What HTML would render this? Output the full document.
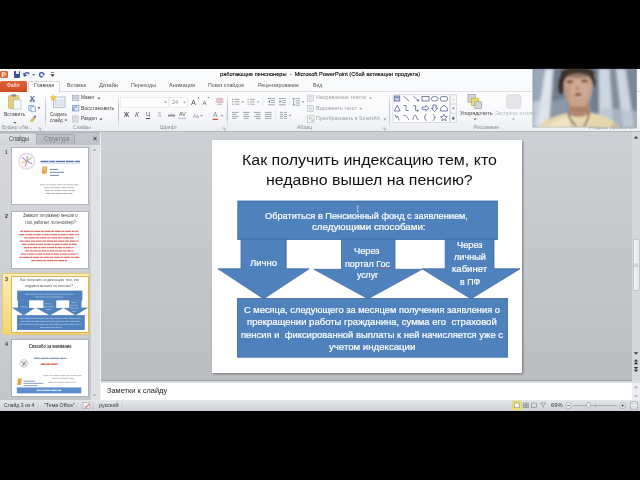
<!DOCTYPE html>
<html><head><meta charset="utf-8">
<style>
*{margin:0;padding:0;box-sizing:border-box}
html,body{width:640px;height:480px;overflow:hidden;background:#000}
body{font-family:"Liberation Sans",sans-serif;position:relative;color:#222}
.a{position:absolute}
.t{position:absolute;white-space:pre;transform-origin:0 0;filter:blur(.25px)}
#app{left:0;top:69px;width:640px;height:341.8px;background:#fff}
#titlebar{left:0;top:69px;width:640px;height:11px;background:#fbfcfd}
#tabrow{left:0;top:80px;width:640px;height:12px;background:#f9fafb}
#ribbon{left:0;top:92px;width:640px;height:40.4px;background:linear-gradient(#fefefe,#f7f8fa 60%,#eceef1);border-bottom:1px solid #b4b8be}
#panel{left:0;top:132px;width:100px;height:268px;background:#d3d6db}
#edit{left:100px;top:132px;width:540px;height:249px;background:linear-gradient(#cccfd3,#bbbdc1);border-bottom:1px solid #9da0a6}
#notes{left:100px;top:381px;width:540px;height:19px;background:#fff;border-top:2px solid #d9dce0}
#status{left:0;top:399.8px;width:640px;height:11px;background:linear-gradient(#e4e6ea,#cfd2d7)}
#slide{left:212px;top:140px;width:310.2px;height:233px;background:#fff;box-shadow:1px 1px 2px rgba(0,0,0,.4)}
.blue{fill:#4f81bd;stroke:#3f6aa3;stroke-width:.8}

.sep{top:94px;width:1px;height:35px;background:linear-gradient(rgba(190,194,200,0),#c3c7cd 30%,#c3c7cd 70%,rgba(190,194,200,0))}
.th{background:#fff;border:1px solid #aeb2b8}
</style></head><body>
<div id="app" class="a"></div>
<div id="titlebar" class="a"></div>
<div id="tabrow" class="a"></div>
<div id="ribbon" class="a"></div>
<div id="panel" class="a"></div>
<div id="edit" class="a"></div>
<div id="notes" class="a"></div>
<div id="status" class="a"></div>

<!-- FILE TAB + active tab -->
<div class="a" style="left:0;top:80.5px;width:26.5px;height:11px;background:linear-gradient(#e0633a,#cf4a22);border-radius:1.5px 1.5px 0 0"></div>
<div class="a" style="left:28px;top:80.5px;width:32px;height:12px;background:#fefefe;border:1px solid #d6d9de;border-bottom:none;border-radius:2px 2px 0 0"></div>
<!-- QAT icons -->
<div class="a" style="left:0;top:70.6px;width:7.5px;height:7.2px;background:#e9773f;border:1px solid #c9673a;border-radius:1px"></div>
<div class="a" style="left:14px;top:71px;width:6px;height:7px;background:#3a4f9a;border-radius:1px"></div>
<div class="a" style="left:15.5px;top:71px;width:3px;height:2.5px;background:#dfe6f5"></div>
<div class="a" style="left:60px;top:91.3px;width:580px;height:.8px;background:#dde0e5"></div>
<!-- RIBBON separators -->
<div class="a sep" style="left:45px"></div>
<div class="a sep" style="left:118px"></div>
<div class="a sep" style="left:227px"></div>
<div class="a sep" style="left:388.5px"></div>
<!-- PANEL -->
<div class="a" style="left:0;top:132px;width:100px;height:12.5px;background:linear-gradient(#b3b7bd,#c4c7cd 18%,#c0c3c9)"></div>
<div class="a" style="left:0;top:133.2px;width:36.6px;height:11.8px;background:linear-gradient(#dddfe3,#cfd2d7);border-right:1px solid #a9adb4;border-top:1px solid #c2c5cb;border-radius:0 2px 0 0"></div>
<div class="a" style="left:37px;top:133.8px;width:38px;height:10.7px;background:linear-gradient(#bfc2c8,#b6b9bf);border:1px solid #a4a8af;border-left:none;border-bottom:none;border-radius:0 2px 0 0"></div>
<div class="a" style="left:0;top:144.5px;width:100px;height:255.5px;background:linear-gradient(#d6d8dc,#c3c6cb)"></div>
<div class="a" style="left:90.6px;top:144.5px;width:9px;height:255.5px;background:#dfe1e5"></div>
<div class="a" style="left:99.6px;top:132.4px;width:1.8px;height:267.6px;background:#eff0f2"></div>
<!-- thumbs -->
<div class="a th" style="left:10.6px;top:146.5px;width:78px;height:58.5px"></div>
<div class="a th" style="left:10.6px;top:211px;width:78px;height:57.6px"></div>
<div class="a" style="left:1.6px;top:273px;width:88.8px;height:61.8px;background:linear-gradient(#fbeeb4,#f3d470);border:1px solid #e6c970;border-radius:1.5px"></div>
<div class="a th" style="left:10.6px;top:275.5px;width:78px;height:57px;border-color:#d9b860"></div>
<div class="a th" style="left:10.6px;top:338.5px;width:78px;height:58.5px"></div>
<!-- right scrollbar -->
<div class="a" style="left:632px;top:132px;width:8px;height:249px;background:#d4d7dc"></div>
<div class="a" style="left:632.7px;top:239px;width:7.3px;height:51.5px;background:linear-gradient(90deg,#f2f3f6,#e4e6eb);border:1px solid #c2c5cb;border-radius:1px"></div>
<div class="a" style="left:632px;top:383px;width:8px;height:17px;background:#eceef1"></div>
<div id="slide" class="a"></div>
<svg class="a" style="left:0;top:0" width="640" height="480" viewBox="0 0 640 480">
 <g id="shapes">
  <rect class="blue" x="237.8" y="201" width="259.6" height="38.6"/>
  <polygon class="blue" points="241,239 286.2,239 286.2,268.8 309.2,268.8 263.6,298.8 218,268.8 241,268.8"/>
  <polygon class="blue" points="341.5,239 395,239 395,269.3 422,269.3 368,298.8 314,269.3 341.5,269.3"/>
  <polygon class="blue" points="445.2,239 494,239 494,268.8 520,268.8 471,298.8 422,268.8 445.2,268.8"/>
  <rect class="blue" x="237.4" y="298.4" width="270.2" height="58.8"/>
 </g>
</svg>



<!-- ICONS overlay -->
<svg class="a" style="left:0;top:0" width="640" height="480" viewBox="0 0 640 480">
 <defs>
  <g id="dd"><path d="M0,0 L3,0 L1.5,1.8 Z" fill="#555"/></g>
  <g id="ddl"><path d="M0,0 L3,0 L1.5,1.8 Z" fill="#9a9da2"/></g>
 </defs>
 <!-- QAT: undo, redo, customize -->
 <path d="M24.5,75.5 C24.5,72 28.5,71.5 29,74.5 M23.5,73.5 L24.5,76 L27,75" stroke="#3d55a5" stroke-width="1.3" fill="none"/>
 <use href="#dd" x="32.2" y="74"/>
 <path d="M44,75.5 C44,72 40,71.5 39.5,74.5 C39.3,76.5 41.5,77.5 43,76.5" stroke="#3d55a5" stroke-width="1.3" fill="none"/>
 <path d="M50.8,72.5 h3.4 M50.8,74.5 L54.2,74.5 L52.5,76.5 Z" stroke="#444" stroke-width=".6" fill="#444"/>
 <!-- Paste -->
 <rect x="8.5" y="95.5" width="10.5" height="13" rx="1" fill="#e6cd7d" stroke="#c9a94e" stroke-width=".6"/>
 <rect x="11.5" y="94.3" width="4.5" height="2.4" rx=".6" fill="#8f8f95"/>
 <rect x="13.6" y="100" width="7.4" height="9" fill="#f6f8fc" stroke="#aab4c8" stroke-width=".6"/>
 <use href="#dd" x="13.5" y="122"/>
 <!-- cut / copy / painter -->
 <path d="M30.5,96 L33.5,100.5 M34,96 L31,100.5" stroke="#3a4f8f" stroke-width="1"/>
 <circle cx="30.8" cy="101" r="1" fill="none" stroke="#3a4f8f" stroke-width=".6"/><circle cx="33.8" cy="101" r="1" fill="none" stroke="#3a4f8f" stroke-width=".6"/>
 <rect x="28.8" y="105.3" width="4.4" height="5" fill="#dbe6f6" stroke="#6f8fc4" stroke-width=".6"/>
 <rect x="31" y="106.8" width="4.4" height="5" fill="#eaf1fb" stroke="#6f8fc4" stroke-width=".6"/>
 <use href="#dd" x="37.5" y="107.3"/>
 <path d="M29.5,121.5 L33,117 L35.5,118.5 L32.5,122 Z" fill="#d9b95c"/><path d="M33.3,116.8 L35.2,115.2 L36.2,116.4 L35.4,118.3 Z" fill="#5d6fa3"/>
 <path d="M38,128 l2.6,0 l0,2.6 M40.6,130.6 L38.6,128.6" stroke="#8a8d92" stroke-width=".5" fill="none"/>
 <!-- New slide -->
 <rect x="53.5" y="97" width="11.5" height="10.5" fill="#f4f7fb" stroke="#9aa4b4" stroke-width=".7"/>
 <rect x="55.5" y="100" width="7.5" height="5.5" fill="#dfe7f3" stroke="#b0bccd" stroke-width=".4"/>
 <path d="M53.2,94.6 l1.1,1.9 2.1,.3 -1.5,1.5 .4,2.1 -2.1,-1 -2,1 .4,-2.1 -1.5,-1.5 2.1,-.3z" fill="#f1d24a" stroke="#caa72a" stroke-width=".3"/>
 <use href="#dd" x="64.4" y="119.4"/>
 <!-- layout / reset / section icons -->
 <rect x="72.3" y="95.2" width="6.6" height="5.4" fill="#eef2f8" stroke="#8e99ab" stroke-width=".6"/><path d="M73.3,97 h4.6 M73.3,98.8 h2 M76,98.8 h2" stroke="#7f8da6" stroke-width=".7"/>
 <rect x="72.3" y="105.6" width="6.6" height="5.4" fill="#dce7f5" stroke="#5f7fb7" stroke-width=".6"/><path d="M74,110.8 C72.5,108 75,106 77,107.5" stroke="#3f62a5" stroke-width=".8" fill="none"/>
 <rect x="72.8" y="116" width="5.2" height="6" fill="#f3f4f6" stroke="#9a9ea6" stroke-width=".6"/><path d="M73.8,117.6 h3.2 M73.8,119 h3.2 M73.8,120.4 h3.2" stroke="#a9adb4" stroke-width=".5"/>
 <use href="#dd" x="97.4" y="97.6"/><use href="#dd" x="99.4" y="118.6"/>
 <!-- Font combos -->
 <rect x="120.3" y="97.3" width="48.2" height="9.8" fill="#fff" stroke="#dfe2e7" stroke-width=".6"/>
 <rect x="169.3" y="97.3" width="18" height="9.8" fill="#fff" stroke="#dfe2e7" stroke-width=".6"/>
 <use href="#ddl" x="164" y="101.6"/><use href="#ddl" x="183" y="101.6"/>
 <path d="M197.2,98.2 l1.2,-1.4 1.2,1.4z" fill="#5872b0"/><path d="M207.3,97 l1.1,1.3 1.1,-1.3z" fill="#5872b0"/>
 <rect x="216.5" y="98" width="6.5" height="5" rx="1" fill="#e8c6cb" stroke="#b9a0a8" stroke-width=".4"/><path d="M217,104.5 h5" stroke="#9a9da2" stroke-width=".6"/>
 <path d="M212.6,119.3 h5.4" stroke="#c0392b" stroke-width="1.1"/><use href="#ddl" x="220.6" y="115"/>
 <use href="#ddl" x="200" y="115"/><path d="M178.8,118.4 h6.8 M178.8,118.4 l1,-.7 M185.6,118.4 l-1,-.7" stroke="#6b7fb0" stroke-width=".5" fill="none"/>
 <path d="M222.5,128 l2.6,0 l0,2.6 M225.1,130.6 L223.1,128.6" stroke="#8a8d92" stroke-width=".5" fill="none"/>
 <!-- Paragraph icons row 1 -->
 <g stroke="#8d929a" stroke-width=".8">
  <path d="M234.5,99.4 h5 M234.5,101.8 h5 M234.5,104.2 h5"/><path d="M232,99.4 h1.2 M232,101.8 h1.2 M232,104.2 h1.2" stroke="#6b6f78"/>
  <path d="M250,99.4 h4.5 M250,101.8 h4.5 M250,104.2 h4.5"/><path d="M247.5,99.4 h1.2 M247.5,101.8 h1.2 M247.5,104.2 h1.2" stroke="#6b6f78"/>
  <path d="M268,98.6 h7 M271,100.6 h4 M271,102.6 h4 M268,104.8 h7"/><path d="M278.8,98.6 h7 M281.8,100.6 h4 M281.8,102.6 h4 M278.8,104.8 h7"/>
  <path d="M295.5,98.6 h4.5 M295.5,100.8 h4.5 M295.5,103 h4.5 M295.5,105.2 h4.5"/>
 </g>
 <path d="M268,101.6 l2,-1.4 v2.8z M281.4,101.6 l-2,-1.4 v2.8z" fill="#5872b0"/>
 <path d="M293.6,98 v7.5 M292.5,99.3 l1.1,-1.4 1.1,1.4 M292.5,104.2 l1.1,1.4 1.1,-1.4" stroke="#5872b0" stroke-width=".6" fill="none"/>
 <use href="#ddl" x="241.3" y="101.2"/><use href="#ddl" x="256.6" y="101.2"/><use href="#ddl" x="301.6" y="101.2"/>
 <!-- Paragraph icons row 2 -->
 <g stroke="#8d929a" stroke-width=".8">
  <path d="M232,112.4 h6.8 M232,114.4 h4.6 M232,116.4 h6.8 M232,118.4 h4.6"/>
  <path d="M243,112.4 h6.6 M244,114.4 h4.6 M243,116.4 h6.6 M244,118.4 h4.6"/>
  <path d="M253.8,112.4 h6.8 M256,114.4 h4.6 M253.8,116.4 h6.8 M256,118.4 h4.6"/>
  <path d="M265,112.4 h6.6 M265,114.4 h6.6 M265,116.4 h6.6 M265,118.4 h6.6"/>
  <path d="M280,112.4 h3 M280,114.4 h3 M280,116.4 h3 M280,118.4 h3 M284,112.4 h3 M284,114.4 h3 M284,116.4 h3 M284,118.4 h3"/>
 </g>
 <use href="#ddl" x="288.6" y="114.8"/>
 <path d="M226.2,110 v10" stroke="#d5d8dd" stroke-width=".5"/><path d="M262.8,96 v10 M289.3,96 v10 M275.6,110 v10" stroke="#d5d8dd" stroke-width=".6"/>
 <!-- text direction etc icons -->
 <g fill="#f1f3f6" stroke="#a7abb3" stroke-width=".5">
  <rect x="307.2" y="95" width="6.4" height="6.4"/><rect x="307.2" y="105.3" width="6.4" height="6.4"/><rect x="307.6" y="115.8" width="6.4" height="6.4"/>
 </g>
 <path d="M308.5,96.6 h3.8 M308.5,98.2 h3.8 M308.5,99.8 h3.8 M308.5,107 h3.8 M308.5,108.6 h3.8 M308.5,110.2 h3.8" stroke="#b4b8bf" stroke-width=".5"/>
 <rect x="309" y="117.2" width="2.4" height="1.8" fill="#b9cf9a"/><rect x="311.2" y="119.4" width="2.2" height="1.8" fill="#b9cf9a"/>
 <use href="#ddl" x="369" y="97.6"/><use href="#ddl" x="359.4" y="108"/><use href="#ddl" x="383.4" y="118.6"/>
 <path d="M382.7,128 l2.6,0 l0,2.6 M385.3,130.6 L383.3,128.6" stroke="#8a8d92" stroke-width=".5" fill="none"/>
 <!-- Shapes gallery -->
 <rect x="393" y="94.8" width="56.6" height="27.6" fill="#fff" stroke="#c3c8d0" stroke-width=".6"/>
 <rect x="450.2" y="94.8" width="6.2" height="27.6" fill="#f4f6f8" stroke="#c3c8d0" stroke-width=".6"/>
 <path d="M450.2,104 h6.2 M450.2,113.2 h6.2" stroke="#c3c8d0" stroke-width=".6"/>
 <path d="M452.1,100.2 l1.2,-1.5 1.2,1.5z" fill="#bbb"/><path d="M452.1,107.8 l1.2,1.5 1.2,-1.5z" fill="#444"/><path d="M452.1,117.2 h2.4 M452.1,118.2 l1.2,1.5 1.2,-1.5z" stroke="#444" stroke-width=".5" fill="#444"/>
 <g fill="none" stroke="#3f4f86" stroke-width=".7">
  <rect x="394.2" y="96" width="5.6" height="5" fill="#c5d3ea"/><path d="M395.2,97.6 h3.6" />
  <path d="M403.4,96 L409,101"/><path d="M413.4,96 L418.6,101 M418.6,101 l-1.8,-.4 M418.6,101 l-.4,-1.8"/>
  <rect x="422" y="96.6" width="7" height="4.4"/><ellipse cx="434.6" cy="98.8" rx="3.5" ry="2.3"/><rect x="440.4" y="96.6" width="7" height="4.4" rx="1.2"/>
  <path d="M394.3,111 L397.2,105.2 L400.1,111 Z"/><path d="M403.4,105.6 h2.6 v5 h2.8"/><path d="M413,105.6 h2.6 v5 h2.8 M418.4,110.6 l-1.3,-1 M418.4,110.6 l-1.3,1"/>
  <path d="M422.2,107 h3.6 v-1.6 l3.2,2.8 l-3.2,2.8 v-1.6 h-3.6z"/><path d="M433,105 h3 v3.4 h1.6 l-3.1,3 l-3.1,-3 h1.6z"/><path d="M440.6,111 L440.6,108 L444,105.4 L447.4,108 L447.4,111 Z"/>
  <path d="M395,114.6 l1.5,3 l1,-1.6 l1.6,4.4"/><path d="M403.2,115.6 C406,114.6 407.4,117 409,120"/><path d="M412.8,120 C414,114 415.6,114 416.4,117 S418,120 418.8,119"/>
  <path d="M426.6,114.4 c-1.4,0 -1.4,.6 -1.4,1.6 s0,1.4 -1.2,1.4 c1.2,0 1.2,.6 1.2,1.4 s0,1.6 1.4,1.6"/><path d="M432.8,114.4 c1.4,0 1.4,.6 1.4,1.6 s0,1.4 1.2,1.4 c-1.2,0 -1.2,.6 -1.2,1.4 s0,1.6 -1.4,1.6"/>
  <path d="M443.9,114.2 l1,2.2 2.4,.3 -1.8,1.6 .5,2.4 -2.1,-1.2 -2.1,1.2 .5,-2.4 -1.8,-1.6 2.4,-.3z"/>
 </g>
 <!-- Arrange -->
 <rect x="468" y="94.6" width="7.6" height="7.6" fill="#d3d6dc" stroke="#8a8e96" stroke-width=".6"/>
 <rect x="471.4" y="98.2" width="7.4" height="7.4" fill="#f0de6a" stroke="#b7a33a" stroke-width=".6"/>
 <rect x="474.8" y="101.8" width="6.6" height="6.6" fill="#d3d6dc" stroke="#8a8e96" stroke-width=".6"/>
 <use href="#dd" x="473.6" y="118.4"/>
 <!-- Quick styles (disabled) -->
 <rect x="506.5" y="94.6" width="14.5" height="13.6" rx="3" fill="#e3e5e8" stroke="#d2d5d9" stroke-width=".6"/>
 <use href="#ddl" x="512" y="118.4"/>
 <!-- panel scrollbar arrows -->
 <path d="M92.8,150.6 l1.6,-1.8 1.6,1.8z" fill="#8b8f96"/>
 <path d="M92.8,394.4 l1.6,1.8 1.6,-1.8z" fill="#8b8f96"/>
 <!-- right scrollbar -->
 <path d="M633.8,138.6 l2.2,-2.6 2.2,2.6z" fill="#3a3a3a"/>
 <path d="M633.8,352.2 l2.2,2.6 2.2,-2.6z" fill="#3a3a3a"/>
 <path d="M633.8,361.4 l2.2,-2.2 2.2,2.2z M633.8,364.2 l2.2,-2.2 2.2,2.2z" fill="#2a2a2a"/>
 <path d="M633.8,367 l2.2,2.2 2.2,-2.2z M633.8,369.8 l2.2,2.2 2.2,-2.2z" fill="#2a2a2a"/>
 <path d="M634.4,264 h3.6 M634.4,265.2 h3.6 M634.4,266.4 h3.6" stroke="#9ea3ab" stroke-width=".5"/>
 <path d="M633.8,388.2 l2.2,-2.4 2.2,2.4z M633.8,395.2 l2.2,2.4 2.2,-2.4z" fill="#aeb1b7"/>
 <!-- status bar -->
 <path d="M38.5,402 v8 M78.4,402 v8 M93,402 v8 M122.5,402 v8" stroke="#b5b9bf" stroke-width=".6"/>
 <path d="M39.2,402 v8 M79.1,402 v8 M123.2,402 v8" stroke="#f2f3f5" stroke-width=".6"/>
 <rect x="83" y="402.6" width="6.4" height="5.6" fill="#f4f5f7" stroke="#8f939b" stroke-width=".5"/><path d="M85,406.2 l1.2,1.4 2.6,-3.4" stroke="#c0392b" stroke-width=".9" fill="none"/>
 <rect x="512.4" y="401.2" width="8.8" height="8.6" rx="1" fill="#f6e867" stroke="#dccb3c" stroke-width=".6"/>
 <rect x="514.2" y="403" width="5.2" height="4.8" fill="#fbfbfb" stroke="#6d7079" stroke-width=".5"/>
 <g fill="none" stroke="#6d7079" stroke-width=".5">
  <rect x="523.2" y="403" width="2.2" height="2"/><rect x="526.2" y="403" width="2.2" height="2"/><rect x="523.2" y="405.8" width="2.2" height="2"/><rect x="526.2" y="405.8" width="2.2" height="2"/>
  <rect x="531.6" y="403" width="5" height="4.4"/><path d="M540.4,403 h5.2 l-2.6,3.2z M543,406.2 v1.8"/>
 </g>
 <circle cx="568.6" cy="405.6" r="3" fill="#f1f2f4" stroke="#8f939b" stroke-width=".6"/><path d="M567,405.6 h3.2" stroke="#444" stroke-width=".7"/>
 <path d="M573.5,405.6 h43.5" stroke="#8f939b" stroke-width=".7"/><path d="M595.6,403.8 v3.6" stroke="#8f939b" stroke-width=".5"/>
 <path d="M587,402.6 h3 v4 l-1.5,1.6 l-1.5,-1.6z" fill="#f4f5f7" stroke="#7e828a" stroke-width=".5"/>
 <circle cx="622.6" cy="405.6" r="3" fill="#f1f2f4" stroke="#8f939b" stroke-width=".6"/><path d="M621,405.6 h3.2 M622.6,404 v3.2" stroke="#444" stroke-width=".7"/>
 <rect x="630.4" y="402" width="7" height="7" fill="#f4f5f7" stroke="#8f939b" stroke-width=".6"/><path d="M631.6,403.2 l1.6,1.6 M636.2,403.2 l-1.6,1.6 M631.6,407.8 l1.6,-1.6 M636.2,407.8 l-1.6,-1.6" stroke="#555" stroke-width=".5"/>
</svg>

<!-- THUMB CONTENT -->
<svg class="a" style="left:0;top:0" width="640" height="480" viewBox="0 0 640 480">
 <!-- thumb 1 -->
 <circle cx="26.7" cy="161.3" r="7.8" fill="#fdfbfd" stroke="#e3d3e8" stroke-width="1.3"/>
 <g stroke-width="1.1" stroke-linecap="round" fill="none" opacity=".6">
  <path d="M26.7,161.3 L22.5,157.5" stroke="#8d4fa5"/><path d="M26.7,161.3 L31,157.6" stroke="#5b9a3a"/>
  <path d="M26.7,161.3 L21.6,162.6" stroke="#d5a62a"/><path d="M26.7,161.3 L31.6,163.4" stroke="#3a62b5"/>
  <path d="M26.7,161.3 L25.2,166.3" stroke="#c8372d"/><path d="M26.7,161.3 L27.4,156" stroke="#7a4a9a"/>
 </g>
 <path d="M40.5,161.6 h39.5" stroke="#3f5fa8" stroke-width="1.5" stroke-dasharray="8 .8 6 .8 9 .8" opacity=".85"/>
 <path d="M40.5,163.2 h39.5" stroke="#3f5fa8" stroke-width=".4" opacity=".8"/>
 <path d="M42.4,166.4 h5 l-1,7.4 h-4.4z" fill="#e0a44e"/><path d="M43.2,168 h3.4 M43.2,170 h3" stroke="#f6e2b8" stroke-width=".6"/>
 <path d="M50,169.4 h8 M50,172.4 h14 M50,175.4 h9" stroke="#3f5a9a" stroke-width=".9" opacity=".8"/>
 <path d="M40,184.8 h38.6 M44,187.7 h30 M45,190.6 h30 M46,193.5 h27" stroke="#6a6d74" stroke-width=".8" opacity=".65" stroke-dasharray="5 .7 3 .6 7 .8"/>
 <!-- thumb 2 -->
 <path d="M20.2,231.3 h58.0" stroke="#d33a32" stroke-width="1.2" opacity="0.72" stroke-dasharray="3 .7 6 .6"/><path d="M19.2,234.6 h60.0" stroke="#d33a32" stroke-width="1.2" opacity="0.72" stroke-dasharray="5 .7 2 .6"/><path d="M24.2,237.8 h50.0" stroke="#d33a32" stroke-width="1.2" opacity="0.72" stroke-dasharray="4 .7 6 .6"/><path d="M19.7,241.1 h59.0" stroke="#d33a32" stroke-width="1.2" opacity="0.72" stroke-dasharray="4 .7 6 .6"/><path d="M21.7,244.3 h55.0" stroke="#d33a32" stroke-width="1.2" opacity="0.72" stroke-dasharray="5 .7 2 .6"/><path d="M24.2,247.6 h50.0" stroke="#d33a32" stroke-width="1.2" opacity="0.72" stroke-dasharray="5 .7 2 .6"/><path d="M25.2,250.8 h48.0" stroke="#d33a32" stroke-width="1.2" opacity="0.72" stroke-dasharray="4 .7 3 .6"/><path d="M20.7,254.1 h57.0" stroke="#d33a32" stroke-width="1.2" opacity="0.72" stroke-dasharray="5 .7 2 .6"/><path d="M19.2,257.3 h60.0" stroke="#d33a32" stroke-width="1.2" opacity="0.72" stroke-dasharray="3 .7 6 .6"/><path d="M31.2,260.6 h36.0" stroke="#d33a32" stroke-width="1.2" opacity="0.72" stroke-dasharray="4 .7 6 .6"/>
 <!-- thumb 3 -->
 <g transform="translate(10.8,275.6) scale(0.2500) translate(-212,-140)">
  <use href="#shapes"/>
  <rect x="285.5" y="239.6" width="56.5" height="29.4" fill="#fff"/><rect x="394.5" y="239.6" width="51" height="29.4" fill="#fff"/>
 </g>
 <g stroke="#dfe8f5" opacity=".7" stroke-width=".7" stroke-dasharray="4 .6 6 .6 3 .6">
  <path d="M25,294.2 h49 M35,297 h28"/><path d="M19.8,318.4 h61 M20.5,321.4 h60 M19.2,324.4 h62 M40,327.4 h22"/>
  <path d="M20.6,306.8 h7 M45,303.8 h7 M43.5,306.8 h10.5 M46,309.6 h5.4 M71,302.4 h6 M70,305.3 h8 M70,308.2 h8.5 M71.8,311.2 h4.6"/>
 </g>
 <!-- thumb 4 -->
 <circle cx="23.8" cy="363.4" r="4" fill="#f1f1f1" stroke="#bdbdbd" stroke-width=".6"/>
 <path d="M23.8,363.4 l-2.4,-2 M23.8,363.4 l2.6,-1.8 M23.8,363.4 l2.4,2 M23.8,363.4 l-1,2.8" stroke="#555" stroke-width=".7"/>
 <path d="M33.9,358.2 h33.3" stroke="#3f5a9a" stroke-width="1.1" opacity=".8" stroke-dasharray="6 .7 8 .7 10 .7"/>
 <path d="M40.7,364.2 h17.6" stroke="#cc2f2a" stroke-width="1.3" opacity=".85" stroke-dasharray="5 .6 4 .6 6 .6"/>
 <path d="M43.4,375.6 h38 M52,378.4 h22 M48,382.4 h28" stroke="#6a6d74" stroke-width=".7" opacity=".6" stroke-dasharray="5 .7 3 .6 7 .8"/>
 <path d="M17.8,378.6 h4 l-.8,6.4 h-3.6z" fill="#e0a44e"/>
 <path d="M23.4,381.2 h12 M23.4,383.4 h20 M23.4,385.6 h14" stroke="#3f5a9a" stroke-width=".8" opacity=".75"/>
 <rect x="16.8" y="387.4" width="64.5" height="6" fill="#5b8fd0"/>
 <path d="M36.5,390.4 h25" stroke="#eef3fb" stroke-width="1.1" opacity=".85" stroke-dasharray="5 .7 8 .7 6 .7"/>
</svg>

<svg class="a" style="left:0;top:0" width="640" height="480" viewBox="0 0 640 480">
 <path d="M377.5,268.6 l1.2,-.9 1.2,.9 1.2,-.9 1.2,.9 1.2,-.9 1.2,.9 1.2,-.9 1.2,.9 1.2,-.9 1.2,.9" stroke="#d04a42" stroke-width=".7" fill="none"/>
 <path d="M356.6,206 q1.1,.1 1.1,1 q0,-.9 1.1,-1 M357.7,207 v4.4 M356.6,212.4 q1.1,-.1 1.1,-1 q0,.9 1.1,1" stroke="#e8edf5" stroke-width=".6" fill="none"/>
 <path d="M2.3,72.6 v4.6 M2.3,72.8 h1.6 q1.4,0 1.4,1.2 q0,1.2 -1.4,1.2 h-1.6" stroke="#fff" stroke-width=".9" fill="none"/>
</svg>

<div class="t" style="left:241.8px;top:151.9px;font-size:15.3px;line-height:15.3px;color:#111;transform:scaleX(1.044);">Как получить индексацию тем, кто</div>
<div class="t" style="left:265.6px;top:172.1px;font-size:15.3px;line-height:15.3px;color:#111;transform:scaleX(1.041);">недавно вышел на пенсию?</div>
<div class="t" style="left:265.2px;top:210.5px;font-size:9.6px;line-height:9.6px;color:#fff;transform:scaleX(0.958);-webkit-text-stroke:.22px #fff;">Обратиться в Пенсионный фонд с заявлением,</div>
<div class="t" style="left:312.4px;top:222.1px;font-size:9.6px;line-height:9.6px;color:#fff;transform:scaleX(1.016);-webkit-text-stroke:.22px #fff;">следующими способами:</div>
<div class="t" style="left:250.3px;top:257.8px;font-size:9.6px;line-height:9.6px;color:#fff;transform:scaleX(0.989);-webkit-text-stroke:.22px #fff;">Лично</div>
<div class="t" style="left:354.4px;top:246.0px;font-size:9.6px;line-height:9.6px;color:#fff;transform:scaleX(0.963);-webkit-text-stroke:.22px #fff;">Через</div>
<div class="t" style="left:345.0px;top:258.5px;font-size:9.6px;line-height:9.6px;color:#fff;transform:scaleX(0.933);-webkit-text-stroke:.22px #fff;">портал Гос</div>
<div class="t" style="left:356.9px;top:269.8px;font-size:9.6px;line-height:9.6px;color:#fff;transform:scaleX(0.906);-webkit-text-stroke:.22px #fff;">услуг</div>
<div class="t" style="left:456.9px;top:239.8px;font-size:9.6px;line-height:9.6px;color:#fff;transform:scaleX(0.963);-webkit-text-stroke:.22px #fff;">Через</div>
<div class="t" style="left:453.8px;top:251.9px;font-size:9.6px;line-height:9.6px;color:#fff;transform:scaleX(0.950);-webkit-text-stroke:.22px #fff;">личный</div>
<div class="t" style="left:452.2px;top:264.1px;font-size:9.6px;line-height:9.6px;color:#fff;transform:scaleX(0.991);-webkit-text-stroke:.22px #fff;">кабинет</div>
<div class="t" style="left:459.8px;top:276.6px;font-size:9.6px;line-height:9.6px;color:#fff;transform:scaleX(0.922);-webkit-text-stroke:.22px #fff;">в ПФ</div>
<div class="t" style="left:244.3px;top:305.4px;font-size:9.6px;line-height:9.6px;color:#fff;transform:scaleX(0.971);-webkit-text-stroke:.22px #fff;">С месяца, следующего за месяцем получения заявления о</div>
<div class="t" style="left:247.0px;top:317.4px;font-size:9.6px;line-height:9.6px;color:#fff;transform:scaleX(0.993);-webkit-text-stroke:.22px #fff;">прекращении работы гражданина, сумма его  страховой</div>
<div class="t" style="left:240.8px;top:329.5px;font-size:9.6px;line-height:9.6px;color:#fff;transform:scaleX(0.981);-webkit-text-stroke:.22px #fff;">пенсия и  фиксированной выплаты к ней начисляется уже с</div>
<div class="t" style="left:329.0px;top:341.9px;font-size:9.6px;line-height:9.6px;color:#fff;transform:scaleX(1.005);-webkit-text-stroke:.22px #fff;">учетом индексации</div>
<div class="t" style="left:220.0px;top:71.7px;font-size:5.9px;line-height:5.9px;color:#000;transform:scaleX(0.954);-webkit-text-stroke:.12px #000;">работающие пенсионеры  -  Microsoft PowerPoint (Сбой активации продукта)</div>
<div class="t" style="left:6.9px;top:82.8px;font-size:5.8px;line-height:5.8px;color:#fff;transform:scaleX(0.876);">Файл</div>
<div class="t" style="left:34.0px;top:82.8px;font-size:5.8px;line-height:5.8px;color:#3c3c3c;transform:scaleX(0.906);">Главная</div>
<div class="t" style="left:67.0px;top:82.8px;font-size:5.8px;line-height:5.8px;color:#555;transform:scaleX(0.882);">Вставка</div>
<div class="t" style="left:99.0px;top:82.8px;font-size:5.8px;line-height:5.8px;color:#555;transform:scaleX(0.974);">Дизайн</div>
<div class="t" style="left:131.0px;top:82.8px;font-size:5.8px;line-height:5.8px;color:#555;transform:scaleX(0.919);">Переходы</div>
<div class="t" style="left:169.0px;top:82.8px;font-size:5.8px;line-height:5.8px;color:#555;transform:scaleX(0.955);">Анимация</div>
<div class="t" style="left:207.7px;top:82.8px;font-size:5.8px;line-height:5.8px;color:#555;transform:scaleX(0.902);">Показ слайдов</div>
<div class="t" style="left:257.9px;top:82.8px;font-size:5.8px;line-height:5.8px;color:#555;transform:scaleX(0.916);">Рецензирование</div>
<div class="t" style="left:312.7px;top:82.8px;font-size:5.8px;line-height:5.8px;color:#555;transform:scaleX(0.876);">Вид</div>
<div class="t" style="left:4.4px;top:111.5px;font-size:5.6px;line-height:5.6px;color:#3c3c3c;transform:scaleX(0.894);">Вставить</div>
<div class="t" style="left:2.3px;top:125.3px;font-size:5.6px;line-height:5.6px;color:#8a8d92;transform:scaleX(0.914);">Буфер обм...</div>
<div class="t" style="left:49.7px;top:111.5px;font-size:5.6px;line-height:5.6px;color:#3c3c3c;transform:scaleX(0.795);">Создать</div>
<div class="t" style="left:50.3px;top:117.5px;font-size:5.6px;line-height:5.6px;color:#3c3c3c;transform:scaleX(0.816);">слайд</div>
<div class="t" style="left:81.3px;top:95.3px;font-size:5.6px;line-height:5.6px;color:#3c3c3c;transform:scaleX(0.865);">Макет</div>
<div class="t" style="left:81.3px;top:105.8px;font-size:5.6px;line-height:5.6px;color:#3c3c3c;transform:scaleX(0.927);">Восстановить</div>
<div class="t" style="left:81.3px;top:116.3px;font-size:5.6px;line-height:5.6px;color:#3c3c3c;transform:scaleX(0.849);">Раздел</div>
<div class="t" style="left:73.2px;top:125.3px;font-size:5.6px;line-height:5.6px;color:#8a8d92;transform:scaleX(0.855);">Слайды</div>
<div class="t" style="left:172.0px;top:99.6px;font-size:5.6px;line-height:5.6px;color:#8a8d92;transform:scaleX(0.962);">24</div>
<div class="t" style="left:191.0px;top:99.1px;font-size:7px;line-height:7px;color:#555;transform:scaleX(1.070);">A</div>
<div class="t" style="left:202.5px;top:99.9px;font-size:6px;line-height:6px;color:#555;">A</div>
<div class="t" style="left:123.8px;top:112.2px;font-size:6.4px;line-height:6.4px;color:#555;font-weight:700;transform:scaleX(0.865);">Ж</div>
<div class="t" style="left:135.0px;top:112.2px;font-size:6.4px;line-height:6.4px;color:#555;transform:scaleX(1.018);font-style:italic;">К</div>
<div class="t" style="left:146.0px;top:112.2px;font-size:6.4px;line-height:6.4px;color:#555;transform:scaleX(0.938);text-decoration:underline;">Ч</div>
<div class="t" style="left:158.0px;top:112.2px;font-size:6.4px;line-height:6.4px;color:#8a8d92;transform:scaleX(0.703);">S</div>
<div class="t" style="left:167.5px;top:112.8px;font-size:5.4px;line-height:5.4px;color:#8a8d92;transform:scaleX(0.804);text-decoration:line-through;">abc</div>
<div class="t" style="left:178.8px;top:112.2px;font-size:5.2px;line-height:5.2px;color:#555;transform:scaleX(1.023);">AV</div>
<div class="t" style="left:192.5px;top:112.5px;font-size:6px;line-height:6px;color:#8a8d92;transform:scaleX(0.817);">Aa</div>
<div class="t" style="left:213.0px;top:111.8px;font-size:6.6px;line-height:6.6px;color:#8a8d92;transform:scaleX(1.021);">A</div>
<div class="t" style="left:160.0px;top:125.0px;font-size:5.6px;line-height:5.6px;color:#8a8d92;transform:scaleX(0.924);">Шрифт</div>
<div class="t" style="left:316.3px;top:95.3px;font-size:5.6px;line-height:5.6px;color:#9a9da2;transform:scaleX(0.943);">Направление текста</div>
<div class="t" style="left:316.3px;top:105.8px;font-size:5.6px;line-height:5.6px;color:#9a9da2;transform:scaleX(0.934);">Выровнять текст</div>
<div class="t" style="left:316.3px;top:116.3px;font-size:5.6px;line-height:5.6px;color:#9a9da2;transform:scaleX(0.939);">Преобразовать в SmartArt</div>
<div class="t" style="left:297.0px;top:125.0px;font-size:5.6px;line-height:5.6px;color:#8a8d92;transform:scaleX(0.955);">Абзац</div>
<div class="t" style="left:459.5px;top:110.8px;font-size:5.6px;line-height:5.6px;color:#3c3c3c;transform:scaleX(0.976);">Упорядочить</div>
<div class="t" style="left:494.5px;top:110.8px;font-size:5.6px;line-height:5.6px;color:#b5b8bc;transform:scaleX(0.953);">Экспресс-стили</div>
<div class="t" style="left:473.8px;top:125.0px;font-size:5.6px;line-height:5.6px;color:#8a8d92;transform:scaleX(0.887);">Рисование</div>
<div class="t" style="left:589.4px;top:125.2px;font-size:5.6px;line-height:5.6px;color:#8a8d92;transform:scaleX(1.124);">Редактирование</div>
<div class="t" style="left:8.8px;top:135.9px;font-size:6.4px;line-height:6.4px;color:#3c3c3c;transform:scaleX(0.828);">Слайды</div>
<div class="t" style="left:43.5px;top:135.9px;font-size:6.4px;line-height:6.4px;color:#777;transform:scaleX(0.841);">Структура</div>
<div class="t" style="left:93.4px;top:135.4px;font-size:8px;line-height:8px;color:#444;font-weight:700;transform:scaleX(0.878);">×</div>
<div class="t" style="left:5.3px;top:149.3px;font-size:6px;line-height:6px;color:#333;font-weight:700;transform:scaleX(0.688);">1</div>
<div class="t" style="left:5.0px;top:213.1px;font-size:6px;line-height:6px;color:#333;font-weight:700;transform:scaleX(0.897);">2</div>
<div class="t" style="left:5.0px;top:275.6px;font-size:6px;line-height:6px;color:#333;font-weight:700;transform:scaleX(0.897);">3</div>
<div class="t" style="left:5.0px;top:340.6px;font-size:6px;line-height:6px;color:#333;font-weight:700;transform:scaleX(0.897);">4</div>
<div class="t" style="left:107.3px;top:387.0px;font-size:7.6px;line-height:7.6px;color:#222;transform:scaleX(0.977);">Заметки к слайду</div>
<div class="t" style="left:4.1px;top:403.3px;font-size:5.6px;line-height:5.6px;color:#333;transform:scaleX(0.907);">Слайд 3 из 4</div>
<div class="t" style="left:44.0px;top:403.3px;font-size:5.6px;line-height:5.6px;color:#333;transform:scaleX(0.933);">&quot;Тема Office&quot;</div>
<div class="t" style="left:99.0px;top:403.3px;font-size:5.6px;line-height:5.6px;color:#333;transform:scaleX(0.976);">русский</div>
<div class="t" style="left:551.0px;top:403.4px;font-size:5.2px;line-height:5.2px;color:#333;transform:scaleX(1.107);">69%</div>
<div class="t" style="left:22.7px;top:214.2px;font-size:4.6px;line-height:4.6px;color:#444;transform:scaleX(0.900);">Зависит ли размер пенсии о</div>
<div class="t" style="left:24.5px;top:220.7px;font-size:4.6px;line-height:4.6px;color:#444;transform:scaleX(0.797);">того, работает ли пенсионер?</div>
<div class="t" style="left:19.5px;top:278.4px;font-size:3.9px;line-height:3.9px;color:#555;transform:scaleX(0.952);">Как получить индексацию тем, кто</div>
<div class="t" style="left:25.0px;top:283.6px;font-size:3.9px;line-height:3.9px;color:#555;transform:scaleX(0.950);">недавно вышел на пенсию?</div>
<div class="t" style="left:28.5px;top:344.1px;font-size:5px;line-height:5px;color:#333;font-weight:700;transform:scaleX(0.789);">Спасибо за внимание</div>
<!-- WEBCAM -->
<svg class="a" style="left:530px;top:68px" width="110" height="62" viewBox="0 0 640 361">
 <defs>
  <clipPath id="cclip"><rect x="14" y="5" width="608" height="342"/></clipPath>
  <filter id="cbl" x="-5%" y="-5%" width="110%" height="110%"><feGaussianBlur stdDeviation="5"/></filter>
  <filter id="cbl2" x="-5%" y="-5%" width="110%" height="110%"><feGaussianBlur stdDeviation="9"/></filter>
 </defs>
 <g clip-path="url(#cclip)">
  <rect x="14" y="5" width="608" height="342" fill="#8592a3"/>
  <g filter="url(#cbl2)">
   <polygon points="14,5 80,5 45,347 14,347" fill="#9aa7b8"/>
   <polygon points="14,200 120,180 120,347 14,347" fill="#c3ccd8"/>
   <polygon points="88,5 135,5 112,347 38,347" fill="#dde4ec"/>
   <polygon points="135,5 200,5 215,260 115,347" fill="#6f7c8e"/>
   <polygon points="120,200 215,170 215,300 110,347" fill="#8a97a9"/>
   <polygon points="365,5 405,5 400,260 350,250" fill="#717e90"/>
   <polygon points="400,5 462,5 485,347 405,347" fill="#cdd6e1"/>
   <polygon points="466,5 500,5 540,347 490,347" fill="#808c9d"/>
   <polygon points="500,5 555,5 605,347 540,347" fill="#ccd5e0"/>
   <polygon points="562,5 622,5 622,300 610,347" fill="#7a8799"/>
   <polygon points="420,230 622,250 622,347 400,347" fill="#b7c1ce" opacity=".7"/>
  </g>
  <g filter="url(#cbl)">
   <!-- shoulders -->
   <path d="M50,347 C70,310 120,285 215,262 L345,258 C420,275 480,295 525,347 Z" fill="#e6d6ad"/>
   <path d="M100,347 C125,315 170,295 230,280 L235,347 Z" fill="#efe3c2"/>
   <path d="M470,347 C470,320 490,315 515,330 L525,347 Z" fill="#cdb9a0"/>
   <!-- neck -->
   <path d="M228,190 L342,190 L346,262 C318,292 250,292 224,266 Z" fill="#b38871"/>
   <!-- hair -->
   <path d="M170,150 C150,60 185,0 280,0 C365,0 392,60 376,120 C368,95 355,55 280,45 C210,55 196,105 192,150 Z" fill="#3a2d29"/>
   <ellipse cx="277" cy="28" rx="98" ry="34" fill="#3e302b"/>
   <!-- face -->
   <path d="M196,100 C194,55 235,32 280,32 C330,32 368,55 364,108 C362,150 346,195 316,226 C297,243 265,243 246,226 C216,195 199,150 196,100 Z" fill="#c8a18b"/>
   <ellipse cx="278" cy="44" rx="66" ry="14" fill="#6d564a" opacity=".55"/><ellipse cx="288" cy="125" rx="52" ry="62" fill="#d6b09b" opacity=".55"/><ellipse cx="285" cy="238" rx="50" ry="16" fill="#9c745f" opacity=".6"/>
   <ellipse cx="232" cy="80" rx="20" ry="7" fill="#5b4239"/>
   <ellipse cx="317" cy="76" rx="20" ry="7" fill="#5b4239"/>
   <ellipse cx="280" cy="155" rx="20" ry="9" fill="#8a5247"/>
   <ellipse cx="277" cy="117" rx="10" ry="14" fill="#b88e79"/>
   <ellipse cx="215" cy="150" rx="14" ry="40" fill="#b78d78" opacity=".6"/>
   <!-- necklace -->
   <path d="M222,262 C230,300 250,325 268,336" stroke="#3a2a22" stroke-width="7" fill="none"/>
   <path d="M345,256 C340,292 330,320 313,336" stroke="#3a2a22" stroke-width="7" fill="none"/>
  </g>
 </g>
</svg>
</body></html>
